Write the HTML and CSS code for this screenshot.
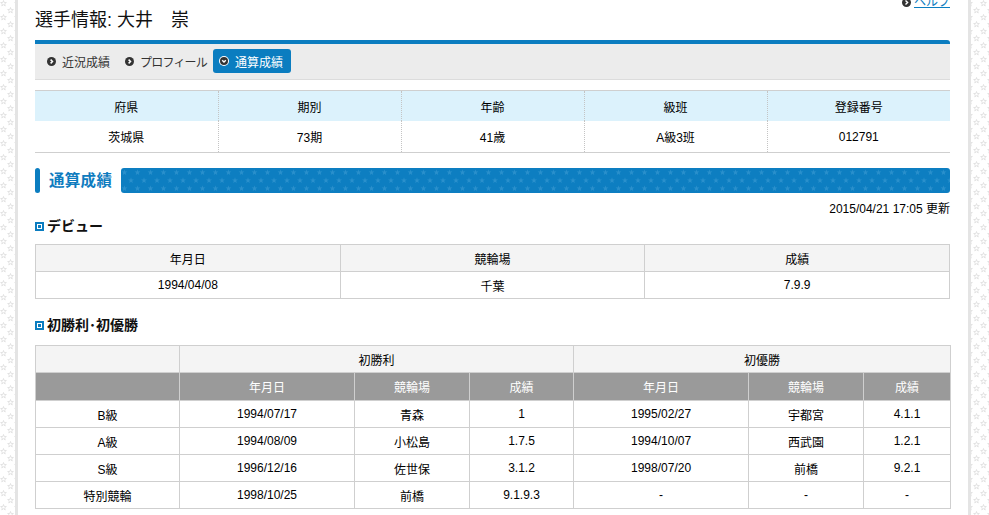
FILE: index.html
```html
<!DOCTYPE html>
<html lang="ja">
<head>
<meta charset="utf-8">
<title>選手情報</title>
<link rel="stylesheet" href="styles.css">
</head>
<body>
<div class="page">
  <div class="header">
    <h1 class="title">選手情報: 大井　崇</h1>
    <a class="help" href="#"><svg class="ico" width="9" height="9" viewBox="0 0 9 9"><circle cx="4.5" cy="4.5" r="4.5" fill="#333"/><path d="M3.5 2.5 L5.6 4.5 L3.5 6.5" stroke="#fff" stroke-width="1.4" fill="none"/></svg><span>ヘルプ</span></a>
  </div>

  <div class="tabbar">
    <a class="tab" href="#"><svg class="ico" width="9" height="9" viewBox="0 0 9 9"><circle cx="4.5" cy="4.5" r="4.5" fill="#333"/><path d="M3.6 2.6 L5.5 4.5 L3.6 6.4" stroke="#fff" stroke-width="1.5" fill="none"/></svg>近況成績</a>
    <a class="tab tight" href="#"><svg class="ico" width="9" height="9" viewBox="0 0 9 9"><circle cx="4.5" cy="4.5" r="4.5" fill="#333"/><path d="M3.6 2.6 L5.5 4.5 L3.6 6.4" stroke="#fff" stroke-width="1.5" fill="none"/></svg><span>プロフィール</span></a>
    <a class="tab active" href="#"><svg class="ico" width="10" height="10" viewBox="0 0 10 10"><circle cx="5" cy="5" r="5" fill="#fff"/><circle cx="5" cy="5" r="4" fill="#333"/><path d="M3.2 4.2 L5 6 L6.8 4.2" stroke="#fff" stroke-width="1.4" fill="none"/></svg>通算成績</a>
  </div>

  <table class="info">
    <tr><th>府県</th><th>期別</th><th>年齢</th><th>級班</th><th>登録番号</th></tr>
    <tr><td>茨城県</td><td>73期</td><td>41歳</td><td>A級3班</td><td>012791</td></tr>
  </table>

  <div class="sechead">
    <div class="pill"></div>
    <h2 class="sectitle">通算成績</h2>
    <div class="starbar"></div>
  </div>

  <p class="updated">2015/04/21 17:05 更新</p>

  <h3 class="subhead"><span class="sq"></span>デビュー</h3>
  <table class="grid debut">
    <tr class="lt"><th>年月日</th><th>競輪場</th><th>成績</th></tr>
    <tr><td>1994/04/08</td><td>千葉</td><td>7.9.9</td></tr>
  </table>

  <h3 class="subhead second"><span class="sq"></span>初勝利･初優勝</h3>
  <table class="grid wins">
    <colgroup>
      <col class="c1"><col class="c2"><col class="c3"><col class="c4"><col class="c5"><col class="c6"><col class="c7">
    </colgroup>
    <tr class="lt"><th></th><th colspan="3">初勝利</th><th colspan="3">初優勝</th></tr>
    <tr class="dk"><th></th><th>年月日</th><th>競輪場</th><th>成績</th><th>年月日</th><th>競輪場</th><th>成績</th></tr>
    <tr><td>B級</td><td>1994/07/17</td><td>青森</td><td>1</td><td>1995/02/27</td><td>宇都宮</td><td>4.1.1</td></tr>
    <tr><td>A級</td><td>1994/08/09</td><td>小松島</td><td>1.7.5</td><td>1994/10/07</td><td>西武園</td><td>1.2.1</td></tr>
    <tr><td>S級</td><td>1996/12/16</td><td>佐世保</td><td>3.1.2</td><td>1998/07/20</td><td>前橋</td><td>9.2.1</td></tr>
    <tr><td>特別競輪</td><td>1998/10/25</td><td>前橋</td><td>9.1.9.3</td><td>-</td><td>-</td><td>-</td></tr>
  </table>
</div>
</body>
</html>
```

FILE: styles.css
```css
html, body {
  margin: 0;
  padding: 0;
}
body {
  background-color: #fff;
  background-image: url("data:image/svg+xml,%3Csvg xmlns='http://www.w3.org/2000/svg' width='14' height='14' viewBox='0 0 14 14'%3E%3Cg fill='none' stroke='%23dcdcdc' stroke-width='0.8'%3E%3Cpath transform='translate(3.5 3.5)' d='M0 -3L0.705 -0.971L2.853 -0.927L1.141 0.371L1.763 2.427L0 1.2L-1.763 2.427L-1.141 0.371L-2.853 -0.927L-0.705 -0.971Z'/%3E%3Cpath transform='translate(10.5 10.5)' d='M0 -3L0.705 -0.971L2.853 -0.927L1.141 0.371L1.763 2.427L0 1.2L-1.763 2.427L-1.141 0.371L-2.853 -0.927L-0.705 -0.971Z'/%3E%3C/g%3E%3C/svg%3E");
  font-family: "Liberation Sans", "Noto Sans CJK JP", sans-serif;
  font-size: 12px;
  color: #000;
  overflow: hidden;
}
.page {
  margin-left: 15px;
  width: 915px;
  min-height: 515px;
  padding: 0 18px 0 17px;
  background: #fff;
  border-left: 3px solid #e4e4e4;
  border-right: 3px solid #e4e4e4;
}
.header {
  display: flex;
  justify-content: space-between;
  align-items: flex-start;
  padding-top: 8px;
  margin-bottom: 8px;
}
.title {
  margin: 0;
  font-size: 18px;
  font-weight: normal;
  line-height: 24px;
  color: #111;
}
.help {
  display: flex;
  align-items: center;
  gap: 3px;
  margin-top: -13px;
  color: #0b7dc0;
  font-size: 12px;
  line-height: 14px;
  text-decoration: none;
}
.help span {
  text-decoration: underline;
}
.ico {
  display: block;
  flex: none;
}
.tabbar {
  display: flex;
  align-items: center;
  height: 35px;
  padding-left: 5px;
  background: #ececec;
  border-top: 4px solid #0b7dc0;
  border-bottom: 1px solid #dcdcdc;
  border-radius: 0 3px 0 0;
}
.tab {
  display: flex;
  align-items: center;
  gap: 6px;
  height: 24px;
  padding: 0 7px;
  color: #333;
  text-decoration: none;
  font-size: 12px;
  border-radius: 3px;
}
.tab.tight {
  padding-right: 6px;
}
.tab.tight span {
  letter-spacing: -0.8px;
}
.tab + .tab {
  margin-left: 1px;
}
.tab.active {
  background: #0b7dc0;
  color: #fff;
  padding: 0 8px 0 6px;
  gap: 6px;
  margin-left: 0;
  margin-bottom: 1px;
}
.info {
  width: 100%;
  margin-top: 10px;
  border-collapse: collapse;
  table-layout: fixed;
  border-top: 1px solid #cfcfcf;
  border-bottom: 1px solid #cfcfcf;
}
.info th, .info td {
  text-align: center;
  font-weight: normal;
  padding: 0;
  border-left: 1px dotted #c4c4c4;
}
.info th:first-child, .info td:first-child {
  border-left: none;
}
.info th {
  height: 30px;
  background: #dcf2fc;
}
.info td {
  height: 31px;
}
.sechead {
  display: flex;
  align-items: center;
  margin-top: 15px;
  height: 25px;
}
.pill {
  width: 5px;
  height: 25px;
  border-radius: 3px;
  background: #0b7dc0;
}
.sectitle {
  margin: 0 0 0 9px;
  font-size: 15.5px;
  font-weight: bold;
  color: #0f7cbf;
  line-height: 25px;
  letter-spacing: 0.3px;
}
.starbar {
  flex: 1;
  height: 25px;
  margin-left: 9px;
  border-radius: 3px;
  background-color: #0d7ec1;
  background-image: url("data:image/svg+xml,%3Csvg xmlns='http://www.w3.org/2000/svg' width='13' height='16' viewBox='0 0 13 16'%3E%3Cg fill='%232a90cc'%3E%3Cpath transform='translate(3.5 4.5)' d='M0 -3L0.705 -0.971L2.853 -0.927L1.141 0.371L1.763 2.427L0 1.2L-1.763 2.427L-1.141 0.371L-2.853 -0.927L-0.705 -0.971Z'/%3E%3Cpath transform='translate(10 12.5)' d='M0 -3L0.705 -0.971L2.853 -0.927L1.141 0.371L1.763 2.427L0 1.2L-1.763 2.427L-1.141 0.371L-2.853 -0.927L-0.705 -0.971Z'/%3E%3C/g%3E%3C/svg%3E");
}
.updated {
  margin: 8px 0 0;
  text-align: right;
  line-height: 16px;
  font-size: 12px;
}
.subhead {
  display: flex;
  align-items: center;
  gap: 3px;
  margin: 0;
  font-size: 14px;
  font-weight: bold;
  line-height: 18px;
  color: #111;
}
.subhead.second {
  margin-top: 17px;
}
.sq {
  display: block;
  width: 5px;
  height: 5px;
  border: 2px solid #0b7dc0;
  background: radial-gradient(#0b7dc0 0 0) center / 3px 3px no-repeat, #fff;
  box-sizing: content-box;
  margin-right: 0;
}
.grid {
  width: 100%;
  border-collapse: collapse;
  table-layout: fixed;
  margin-top: 9px;
}
.grid th, .grid td {
  border: 1px solid #cfcfcf;
  text-align: center;
  font-weight: normal;
  padding: 0;
  height: 26px;
}
.grid tr.lt th {
  background: #f4f4f4;
}
.grid tr.dk th {
  background: #9a9a9a;
  color: #fff;
  height: 27px;
}
.wins {
  margin-top: 11px;
}
.c1 { width: 144px; }
.c2 { width: 175px; }
.c3 { width: 115px; }
.c4 { width: 104px; }
.c5 { width: 175px; }
.c6 { width: 115px; }
.c7 { width: 87px; }
```
